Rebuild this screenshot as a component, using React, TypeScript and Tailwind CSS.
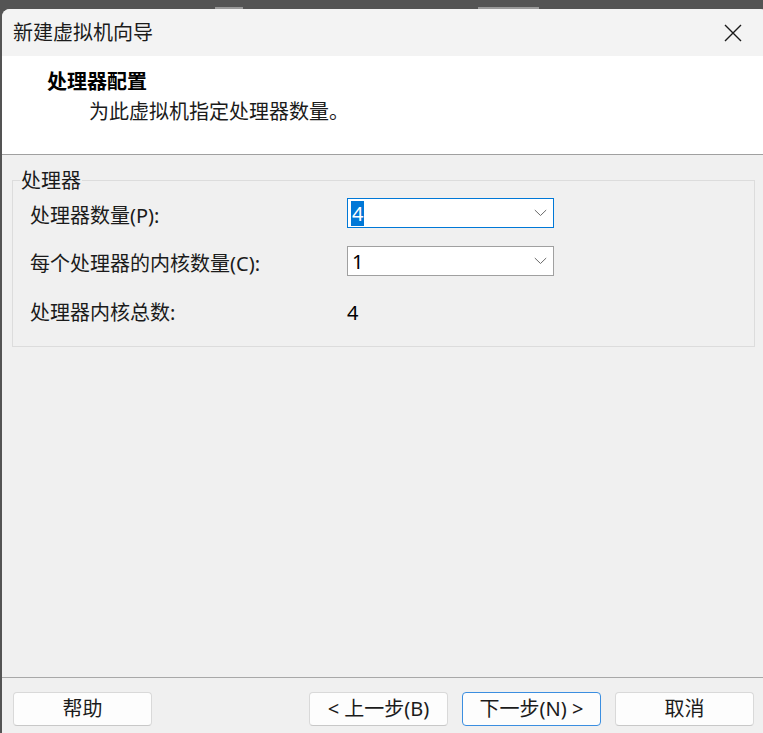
import React from "react";

const FONT = { fontFamily: '"Noto Sans", "Noto Sans CJK SC", sans-serif' };

function Chevron() {
  return (
    <svg width="13" height="8" viewBox="0 0 13 8" fill="none">
      <polyline points="0.8,1 6.5,6.5 12.2,1" stroke="#6a6a6a" strokeWidth="1" />
    </svg>
  );
}

function Combo({ value, focused }: { value: string; focused?: boolean }) {
  return (
    <div
      className={`h-[30px] w-[207px] bg-white border flex items-center justify-between pl-[3px] pr-[6px] ${
        focused ? "border-[#0078d7]" : "border-[#a0a0a0]"
      }`}
    >
      <span
        className={`text-[20px] leading-[25px] px-[1px] ${
          focused ? "bg-[#0078d7] text-white" : "text-black"
        }`}
      >
        {value}
      </span>
      <Chevron />
    </div>
  );
}

function Btn({ children, primary }: { children: React.ReactNode; primary?: boolean }) {
  return (
    <div
      className={`w-[139px] h-[34px] rounded-[4px] bg-[#fdfdfd] border flex items-center justify-center text-[20px] text-[#1b1b1b] ${
        primary ? "border-[#3b8ee0]" : "border-[#d9d9d9] border-b-[#c8c8c8]"
      }`}
    >
      {children}
    </div>
  );
}

export default function App() {
  return (
    <div className="w-[763px] h-[733px] overflow-hidden bg-[#545454] flex flex-col" style={FONT}>
      <div className="h-[9px] flex items-end shrink-0 relative">
        <div className="h-[2px] w-[28px] ml-[215px] bg-[#9a9a9a]" />
        <div className="h-[2px] w-[61px] ml-[235px] bg-[#9a9a9a]" />
      </div>
      <div className="flex-1 pl-[2px] flex">
        <div className="w-[766px] shrink-0 rounded-tl-[8px] rounded-tr-[8px] bg-[#f0f0f0] flex flex-col overflow-hidden">
          {/* Title bar */}
          <div className="h-[47px] bg-[#f3f3f3] flex items-center justify-between pl-[11px] pr-[26px] shrink-0">
            <span className="text-[20px] text-[#1b1b1b]">新建虚拟机向导</span>
            <svg width="18" height="18" viewBox="0 0 18 18">
              <path d="M1 1 L17 17 M17 1 L1 17" stroke="#1a1a1a" strokeWidth="1.4" />
            </svg>
          </div>
          {/* Header */}
          <div className="h-[99px] bg-white border-b border-[#a0a0a0] shrink-0 pl-[45px] pt-[15px]">
            <div className="text-[20px] leading-[22px] font-bold text-black">处理器配置</div>
            <div className="text-[20px] leading-[22px] text-[#1b1b1b] mt-[8px] ml-[42px]">为此虚拟机指定处理器数量。</div>
          </div>
          {/* Body */}
          <div className="flex-1 px-[10px] pt-[25px]">
            <div className="border border-[#dcdcdc] w-[743px] pb-[22px]">
              <div className="-mt-[10px] ml-[7px] w-fit px-[1px] bg-[#f0f0f0] text-[20px] leading-[20px] text-[#1b1b1b]">
                处理器
              </div>
              <div className="grid grid-cols-[317px_207px] pl-[17px] mt-[7px] text-[20px] text-[#1b1b1b] gap-y-[18px]">
                <div className="h-[30px] flex items-center pt-[5px]">处理器数量(P):</div>
                <Combo value="4" focused />
                <div className="h-[30px] flex items-center pt-[5px]">每个处理器的内核数量(C):</div>
                <Combo value="1" />
                <div className="h-[30px] flex items-center pt-[8px]">处理器内核总数:</div>
                <div className="h-[30px] flex items-center pt-[8px] text-black">4</div>
              </div>
            </div>
          </div>
          {/* Footer */}
          <div className="h-[56px] border-t border-[#a8a8a8] shrink-0 flex pt-[14px] pl-[11px]">
            <Btn>帮助</Btn>
            <div className="ml-[157px] flex gap-[14px]">
              <Btn>&lt; 上一步(B)</Btn>
              <Btn primary>下一步(N) &gt;</Btn>
              <Btn>取消</Btn>
            </div>
          </div>
        </div>
      </div>
    </div>
  );
}
